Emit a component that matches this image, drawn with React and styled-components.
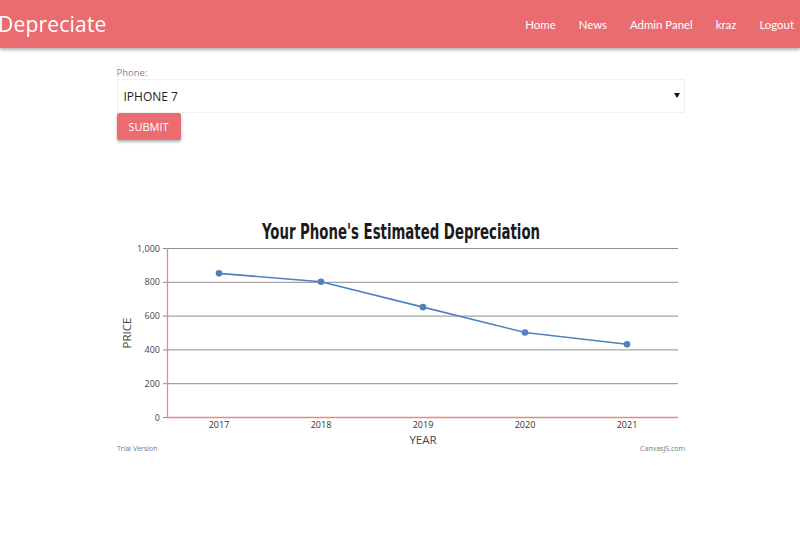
import React from 'react';
import styled, { createGlobalStyle } from 'styled-components';

const GlobalStyle = createGlobalStyle`
  body {
    margin: 0;
    background: #fff;
    font-family: "Open Sans", "Noto Sans", sans-serif;
  }
`;

const Navbar = styled.nav`
  height: 48px;
  background: #e96c71;
  box-shadow: 0 2px 3px rgba(0, 0, 0, 0.3);
  display: flex;
  align-items: center;
  justify-content: space-between;
  padding-right: 6px;
`;

const Brand = styled.a`
  margin-left: -2px;
  color: #fff;
  font-size: 21px;
  letter-spacing: 0.2px;
`;

const NavLinks = styled.div`
  display: flex;
  gap: 23px;
`;

const NavLink = styled.a`
  color: #fff;
  font-family: Lato, "Open Sans", sans-serif;
  font-size: 11.4px;
`;

const Main = styled.main`
  width: 568px;
  margin: 0 auto;
  padding-top: 18px;
  padding-left: 1px;
`;

const Label = styled.label`
  display: block;
  font-size: 9.5px;
  color: #888;
  line-height: 13px;
`;

const SelectWrap = styled.div`
  position: relative;
`;

const Select = styled.select`
  appearance: none;
  width: 100%;
  height: 34px;
  border: 1px solid #f0f0f0;
  background: #fff;
  padding: 0 6px;
  font-family: inherit;
  font-size: 12px;
  color: #222;
  outline: none;
`;

const Arrow = styled.span`
  position: absolute;
  right: 5px;
  top: 14px;
  width: 0;
  height: 0;
  border-left: 3px solid transparent;
  border-right: 3px solid transparent;
  border-top: 5px solid #111;
`;

const SubmitButton = styled.button`
  display: block;
  width: 64px;
  height: 27px;
  border: none;
  border-radius: 2px;
  background: #e96c71;
  color: #fff;
  font-family: inherit;
  font-size: 11px;
  box-shadow: 0 2px 3px rgba(0, 0, 0, 0.3);
`;

const ChartBox = styled.div`
  margin-top: 75px;
`;

const years = [2017, 2018, 2019, 2020, 2021];
const prices = [850, 800, 650, 500, 430];
const ticks = [0, 200, 400, 600, 800, 1000];

const yOf = (v) => 202 - v * 0.169;
const xOf = (i) => 102 + 102 * i;

const DepreciationChart = () => {
  const points = prices.map((p, i) => `${xOf(i)},${yOf(p)}`).join(' ');
  return (
    <svg width="568" height="240" style={{ display: 'block' }}>
      <text
        x="284"
        y="24"
        textAnchor="middle"
        textLength="278"
        lengthAdjust="spacingAndGlyphs"
        fontFamily='"Liberation Sans Narrow", "DejaVu Sans Condensed", "Liberation Sans", sans-serif'
        fontWeight="bold"
        fontSize="21"
        fill="#1a1a1a"
      >
        Your Phone's Estimated Depreciation
      </text>
      {ticks.map((t) => (
        <g key={t}>
          <line x1="46" x2="561" y1={yOf(t) + 0.5} y2={yOf(t) + 0.5} stroke="#8c8c8c" strokeWidth="1" />
          <text
            x="43"
            y={yOf(t) + 3.5}
            textAnchor="end"
            fontFamily='"Open Sans", sans-serif'
            fontSize="9"
            fill="#444"
          >
            {t.toLocaleString('en-US')}
          </text>
        </g>
      ))}
      <line x1="50.5" x2="50.5" y1="33" y2="203" stroke="#e9868a" strokeWidth="1.3" />
      <line x1="50" x2="561" y1={yOf(0) + 0.5} y2={yOf(0) + 0.5} stroke="#e9868a" strokeWidth="1.3" />
      {years.map((y, i) => (
        <text
          key={y}
          x={xOf(i)}
          y="213"
          textAnchor="middle"
          fontFamily='"Open Sans", sans-serif'
          fontSize="9"
          fill="#333"
        >
          {y}
        </text>
      ))}
      <polyline points={points} fill="none" stroke="#4f81bc" strokeWidth="1.6" />
      {prices.map((p, i) => (
        <circle key={i} cx={xOf(i)} cy={yOf(p)} r="3.3" fill="#4f81bc" />
      ))}
      <text x="306" y="229" textAnchor="middle" fontFamily='"Open Sans", sans-serif' fontSize="11.5" fill="#444">
        YEAR
      </text>
      <text
        x="14"
        y="118"
        textAnchor="middle"
        transform="rotate(-90 14 118)"
        fontFamily='"Open Sans", sans-serif'
        fontSize="11.5"
        fill="#444"
      >
        PRICE
      </text>
      <text x="0" y="236" fontFamily='"Open Sans", sans-serif' fontSize="7" fill="#777">
        Trial Version
      </text>
      <text x="568" y="236" textAnchor="end" fontFamily='"Open Sans", sans-serif' fontSize="7" fill="#777">
        CanvasJS.com
      </text>
    </svg>
  );
};

const App = () => (
  <>
    <GlobalStyle />
    <Navbar>
      <Brand>Depreciate</Brand>
      <NavLinks>
        <NavLink>Home</NavLink>
        <NavLink>News</NavLink>
        <NavLink>Admin Panel</NavLink>
        <NavLink>kraz</NavLink>
        <NavLink>Logout</NavLink>
      </NavLinks>
    </Navbar>
    <Main>
      <Label>Phone:</Label>
      <SelectWrap>
        <Select defaultValue="IPHONE 7">
          <option>IPHONE 7</option>
          <option>IPHONE 8</option>
          <option>IPHONE X</option>
        </Select>
        <Arrow />
      </SelectWrap>
      <SubmitButton>SUBMIT</SubmitButton>
      <ChartBox>
        <DepreciationChart />
      </ChartBox>
    </Main>
  </>
);

export default App;
